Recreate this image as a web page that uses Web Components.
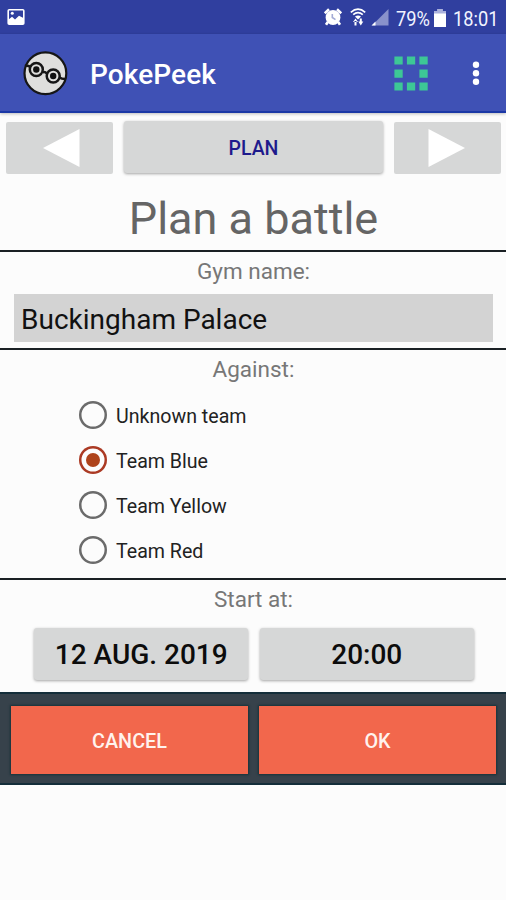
<!DOCTYPE html>
<html lang="en">
<head>
<meta charset="UTF-8">
<title>PokePeek</title>
<style>
  body {
    margin: 0;
    background: #fcfcfc;
    font-family: Roboto, "Liberation Sans", sans-serif;
  }
</style>
</head>
<body>
<battle-app></battle-app>

<script>
class StatusBar extends HTMLElement {
  constructor() {
    super();
    this.attachShadow({ mode: "open" });
  }

  connectedCallback() {
    this.shadowRoot.innerHTML = `
     <style>
      :host {
        display: flex;
        align-items: center;
        height: 34px;
        padding: 0 8px 0 7px;
        box-sizing: border-box;
        background: #303f9f;
        color: #f2f4ff;
        font-size: 21px;
      }
      svg { display: block; flex: none; }
      .picture { margin-right: auto; }
      .alarm { margin-right: 8px; }
      .wifi { margin-right: 5px; }
      .signal { margin-right: 7px; }
      .battery { margin: 1px 7px 0 4px; }
      .text {
        white-space: nowrap;
        line-height: 34px;
        padding-top: 3px;
        transform-origin: left;
      }
      .level { width: 34px; transform: scaleX(.87); }
      .time { width: 45px; transform: scaleX(.87); }
     </style>
     <svg class="picture" width="18" height="18" viewBox="0 0 18 18">
       <rect x="1.2" y="1.7" width="15.6" height="14.6" rx="1" fill="none" stroke="#fff" stroke-width="1.6"/>
       <path d="M1 16V12L5 8.7l3 2.8 4-3.8 5 2.6V16z" fill="#fff"/>
       <circle cx="5.3" cy="5.3" r="1.5" fill="#fff"/>
     </svg>
     <svg class="alarm" width="18" height="18" viewBox="0 0 18 18">
       <circle cx="9" cy="9.5" r="7.4" fill="#fff"/>
       <path d="M.8 5.3 5 1.3M17.2 5.3 13 1.3M3.8 14 2 16.8M14.2 14l1.8 2.8" stroke="#fff" stroke-width="2.6"/>
       <path d="M8.3 6v3.500l3.200 2.200" fill="none" stroke="#a3abd6" stroke-width="1.6"/>
     </svg>
     <svg class="wifi" width="16" height="18" viewBox="0 0 16 18">
       <g fill="none" stroke="#fff" stroke-width="1.7">
         <path d="M.8 4.3Q8-2 15.2 4.3M3.2 6.7q4.8-4.2 9.6 0"/>
       </g>
       <path d="M5 8.4q3-2 6 0L8 11.5z" fill="#fff"/>
       <path d="M3 14h5L5.500 10.500zM4.500 13h2v4.500h-2zM8.300 13.500h5L10.800 17.500zM9.800 10.500h2v4h-2z" fill="#fff"/>
     </svg>
     <svg class="signal" width="18" height="18" viewBox="0 0 18 18">
       <path d="M1 17.500 17.500 1v16.500z" fill="#8992cb"/>
       <path d="M.5 17.500 4.500 13.500v4z" fill="#fff"/>
     </svg>
     <span class="text level">79%</span>
     <svg class="battery" width="12" height="18" viewBox="0 0 12 18">
       <path d="M3.500 0h5v2H12v16H0V2h3.500z" fill="#fff"/>
       <path d="M3.500 0h5v2H12v2.500H0V2h3.500z" fill="#aab1dc"/>
     </svg>
     <span class="text time">18:01</span>
    `;
  }
}

class AppBar extends HTMLElement {
  constructor() {
    super();
    this.attachShadow({ mode: "open" });
  }

  connectedCallback() {
    this.shadowRoot.innerHTML = `
     <style>
      :host {
        display: flex;
        align-items: center;
        height: 79px;
        padding: 0 25px 0 22px;
        box-sizing: border-box;
        background: #3f51b5;
        border-bottom: 2px solid #1b38a6;
        box-shadow: 0 1px 3px rgba(0,0,0,.25);
        color: #fff;
      }
      svg { display: block; flex: none; }
      .title {
        flex: 1;
        margin-left: 22px;
        padding-top: 4px;
        font-size: 28px;
        font-weight: 500;
        letter-spacing: .1px;
        line-height: 32px;
      }
      .menu { margin: 1px 0 0 43px; }
     </style>
     <svg width="46" height="46" viewBox="0 0 46 46">
       <circle cx="23.400" cy="23.300" r="20.900" fill="#dfdfdd" stroke="#161616" stroke-width="2.200"/>
       <g fill="none" stroke="#161616" stroke-width="2.500">
         <circle cx="14.300" cy="19.500" r="6.500"/>
         <circle cx="31.200" cy="26" r="6.500"/>
         <path d="M3 16q3-.8 5.500 1M20.700 22.300q2.500-1 4 1.300M37.500 27.500q2 1.500 5.500 1.500"/>
       </g>
       <circle cx="14.300" cy="19.500" r="3.200" fill="#111"/>
       <circle cx="31.200" cy="26" r="3.200" fill="#111"/>
     </svg>
     <span class="title"><slot></slot></span>
     <svg width="34" height="36" viewBox="0 0 34 36" fill="#3dc796">
       <path d="M.4 1.500h8.300v8H.4zM12.900 1.500h8.300v8h-8.300zM25.400 1.500h8.300v8h-8.300zM.4 14.500h8.300v8.300H.4zM25.400 14.500h8.300v8.300h-8.300zM.4 27.500h8.300v8H.4zM12.900 27.500h8.300v8h-8.300zM25.400 27.500h8.300v8h-8.300z"/>
     </svg>
     <svg class="menu" width="10" height="26" viewBox="0 0 10 26" fill="#fff">
       <circle cx="5" cy="4.800" r="3.200"/>
       <circle cx="5" cy="13.300" r="3.200"/>
       <circle cx="5" cy="21.800" r="3.200"/>
     </svg>
    `;
  }
}

class GreyButton extends HTMLElement {
  constructor() {
    super();
    this.attachShadow({ mode: "open" });
  }

  connectedCallback() {
    this.shadowRoot.innerHTML = `
     <style>
      :host {
        display: block;
        height: 52px;
      }
      button {
        display: flex;
        align-items: center;
        justify-content: center;
        width: 100%;
        height: 100%;
        padding: 0;
        border: 0;
        border-radius: 3px;
        background: #d6d7d7;
        box-shadow: 0 1px 3px rgba(0,0,0,.35);
        font: 500 28px Roboto, "Liberation Sans", sans-serif;
        color: #0c0c0c;
      }
      :host([flat]) button {
        border-radius: 2px;
        box-shadow: none;
      }
      :host([tab]) button {
        font-size: 19.5px;
        padding-top: 2px;
        color: #1e1a8c;
      }
      ::slotted(svg) { display: block; }
     </style>
     <button><slot></slot></button>
    `;
  }
}

class FormSection extends HTMLElement {
  constructor() {
    super();
    this.attachShadow({ mode: "open" });
  }

  connectedCallback() {
    this.shadowRoot.innerHTML = `
     <style>
      :host {
        display: block;
        box-sizing: border-box;
        border-top: 2px solid #1a2024;
      }
      .label {
        height: 42px;
        line-height: 38px;
        padding-left: 1px;
        box-sizing: border-box;
        text-align: center;
        font-size: 22.5px;
        color: #777;
      }
     </style>
     <div class="label">${this.getAttribute("label")}</div>
     <slot></slot>
    `;
  }
}

class TeamOption extends HTMLElement {
  constructor() {
    super();
    this.attachShadow({ mode: "open" });
  }

  connectedCallback() {
    this.shadowRoot.innerHTML = `
     <style>
      :host {
        display: flex;
        align-items: center;
        gap: 9px;
        height: 45px;
        font-size: 19.6px;
        color: #222;
      }
      .ring {
        display: grid;
        place-items: center;
        width: 28px;
        height: 28px;
        border-radius: 50%;
        box-shadow: inset 0 0 0 2.500px #6b6b6b;
      }
      .text { padding-top: 3px; }
      :host([checked]) .ring { box-shadow: inset 0 0 0 2.500px #ab3a24; }
      :host([checked]) .ring::after {
        content: "";
        width: 14px;
        height: 14px;
        border-radius: 50%;
        background: #ae431b;
      }
     </style>
     <span class="ring"></span>
     <span class="text"><slot></slot></span>
    `;
  }
}

class ActionButton extends HTMLElement {
  constructor() {
    super();
    this.attachShadow({ mode: "open" });
  }

  connectedCallback() {
    this.shadowRoot.innerHTML = `
     <style>
      :host {
        display: block;
        flex: 1;
      }
      button {
        width: 100%;
        height: 68px;
        padding: 2px 0 0;
        border: 0;
        background: #f2674c;
        box-shadow: 0 0 2px 1px #17323a;
        font: 500 19.8px Roboto, "Liberation Sans", sans-serif;
        color: #fff3ee;
      }
     </style>
     <button><slot></slot></button>
    `;
  }
}

class BattleApp extends HTMLElement {
  constructor() {
    super();
    this.attachShadow({ mode: "open" });
  }

  connectedCallback() {
    this.render();
    this.initTeamEvents();
  }

  initTeamEvents() {
    const options = this.shadowRoot.querySelectorAll("team-option");

    options.forEach((option) => {
      option.addEventListener("click", () => {
        options.forEach((other) => other.removeAttribute("checked"));
        option.setAttribute("checked", "");
      });
    });
  }

  render() {
    this.shadowRoot.innerHTML = `
     <style>
      :host {
        display: block;
        height: 900px;
        overflow: hidden;
      }
      .tabs {
        display: grid;
        grid-template-columns: 107px 259px 107px;
        gap: 11px;
        padding: 8px 5px 0 6px;
      }
      .tabs grey-button[flat] { margin-top: 1px; }
      h1 {
        margin: 0;
        height: 76px;
        line-height: 90px;
        padding-left: 1px;
        text-align: center;
        font-size: 45px;
        font-weight: 400;
        color: #656565;
      }
      .gym { height: 98px; }
      .against { height: 230px; }
      .start { height: 114px; }
      .name {
        display: block;
        box-sizing: border-box;
        width: 479px;
        height: 48px;
        margin-left: 14px;
        padding: 2px 7px 0;
        border: 0;
        background: #d3d3d3;
        line-height: 48px;
        font-size: 28px;
        color: #111;
      }
      .teams { padding-left: 79px; }
      .when {
        display: grid;
        grid-template-columns: 214px 214px;
        justify-content: center;
        gap: 11.500px;
        padding: 6px 0 0 2px;
      }
      .actions {
        display: flex;
        gap: 11px;
        box-sizing: border-box;
        height: 93px;
        padding: 12px 10px 0 11px;
        background: #37424b;
        border-top: 2px solid #142e3a;
        border-bottom: 2px solid #142e3a;
      }
     </style>
     <status-bar></status-bar>
     <app-bar>PokePeek</app-bar>
     <div class="tabs">
       <grey-button flat>
         <svg width="40" height="38" viewBox="0 0 40 38"><path d="M3 19 39.500 0v38z" fill="#fff"/></svg>
       </grey-button>
       <grey-button tab>PLAN</grey-button>
       <grey-button flat>
         <svg width="40" height="38" viewBox="0 0 40 38"><path d="M37 19 .5 0v38z" fill="#fff"/></svg>
       </grey-button>
     </div>
     <h1>Plan a battle</h1>
     <form-section class="gym" label="Gym name:">
       <div class="name">Buckingham Palace</div>
     </form-section>
     <form-section class="against" label="Against:">
       <div class="teams">
         <team-option>Unknown team</team-option>
         <team-option checked>Team Blue</team-option>
         <team-option>Team Yellow</team-option>
         <team-option>Team Red</team-option>
       </div>
     </form-section>
     <form-section class="start" label="Start at:">
       <div class="when">
         <grey-button>12 AUG. 2019</grey-button>
         <grey-button>20:00</grey-button>
       </div>
     </form-section>
     <div class="actions">
       <action-button>CANCEL</action-button>
       <action-button>OK</action-button>
     </div>
    `;
  }
}

customElements.define("status-bar", StatusBar);
customElements.define("app-bar", AppBar);
customElements.define("grey-button", GreyButton);
customElements.define("form-section", FormSection);
customElements.define("team-option", TeamOption);
customElements.define("action-button", ActionButton);
customElements.define("battle-app", BattleApp);
</script>
</body>
</html>
